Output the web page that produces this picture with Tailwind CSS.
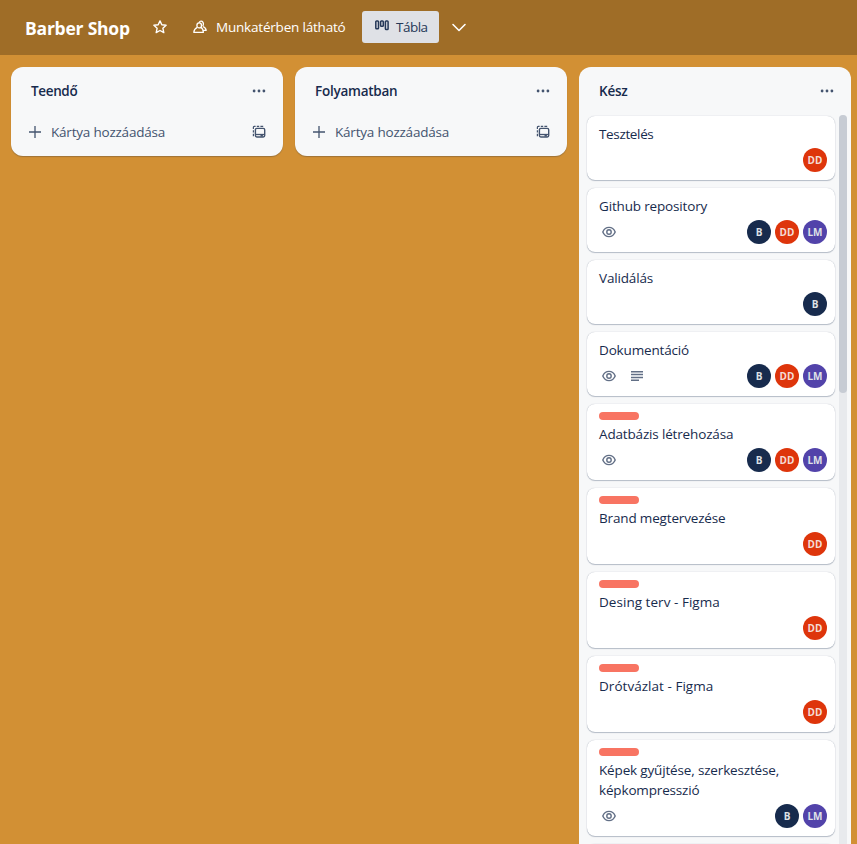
<!DOCTYPE html>
<html lang="hu">
<head>
<meta charset="utf-8">
<title>Barber Shop</title>
<script src="https://cdn.jsdelivr.net/npm/@tailwindcss/browser@4"></script>
</head>
<body class="h-[844px] w-[857px] overflow-hidden bg-[#d29034] font-['Open_Sans','Noto_Sans',sans-serif] text-[13.5px] leading-5 text-[#172b4d]">
<svg class="hidden">
  <symbol id="dots" viewBox="0 0 16 16"><g fill="#44546f"><circle cx="3.1" cy="8" r="1.4"/><circle cx="8" cy="8" r="1.4"/><circle cx="12.9" cy="8" r="1.4"/></g></symbol>
  <symbol id="plus" viewBox="0 0 16 16"><path d="M8 2v12M2 8h12" stroke="#44546f" stroke-width="1.3" fill="none"/></symbol>
  <symbol id="template" viewBox="0 0 16 16"><g fill="none" stroke="#44546f" stroke-width="1.4"><rect x="4.4" y="4.4" width="9.3" height="8.6" rx="1.4"/><path d="M4.6 10.5h9" stroke-width="1.3"/><path d="M9.5 11.8h2.4" stroke-width="1.6"/><path d="M2.4 12.2V9.8M2.4 8.6V6.2M2.4 5V3.2Q2.4 2.3 3.2 2.3H4.6M5.8 2.3h2.4M9.4 2.3h2.8" stroke-width="1.2"/></g></symbol>
  <symbol id="eye" viewBox="0 0 16 16"><g fill="none" stroke="#626f86" stroke-width="1.4"><path d="M1.8 8C3 5.1 5.3 3.4 8 3.4S13 5.1 14.2 8C13 10.9 10.7 12.6 8 12.6S3 10.9 1.8 8Z"/><circle cx="8" cy="8" r="2.2"/></g></symbol>
  <symbol id="lines" viewBox="0 0 16 16"><path d="M2 3.7h12M2 6.5h12M2 9.5h12M2 12.3h8" stroke="#626f86" stroke-width="1.4"/></symbol>
</svg>
<header class="flex h-[55px] items-center bg-black/24 pb-px pl-[25px] text-white">
  <h1 class="w-[128px] pt-px text-[17.5px] font-bold leading-6 tracking-[-0.22px] whitespace-nowrap">Barber Shop</h1>
  <svg class="size-[14px]" viewBox="0 0 14 14" fill="none" stroke="white" stroke-width="1.4" stroke-linejoin="round"><path d="M7 .9 8.8 4.8 13.1 5.3 9.9 8.3 10.8 12.6 7 10.5 3.2 12.6 4.1 8.3.9 5.3 5.2 4.8Z"/></svg>
  <svg class="ml-[26px] size-[14px]" viewBox="0 0 14 14" fill="none" stroke="white" stroke-width="1.3" stroke-linejoin="round"><ellipse cx="6.2" cy="5.4" rx="2.3" ry="2.5"/><path d="M4.3 7.3C2.2 8.2 1 9.6.8 12.3H10.4C10.1 9.7 9.7 8.2 7.9 7.3M6 2.8C6.6 1.1 8 .8 9.1 1.4 10.8 2.4 10.7 4.8 9.7 6.1M9.9 6.5C12 7.4 13 8.4 13.2 10.4H10.4"/></svg>
  <span class="ml-[9px] w-[146px] font-medium tracking-[-0.2px] whitespace-nowrap">Munkatérben látható</span>
  <button class="flex h-8 w-[77px] items-center rounded-[3px] bg-[#dfe1e6] pl-[13px] text-[#253858]">
    <svg class="mb-[3px] h-[11px] w-[15px]" viewBox="0 0 15 11" fill="none" stroke="#253858" stroke-width="1.5"><rect x=".8" y="1" width="2.7" height="7.8" rx=".8"/><rect x="5.6" y="1" width="2.7" height="5.2" rx=".8"/><rect x="10.4" y="1" width="2.7" height="8.6" rx=".8"/></svg>
    <span class="ml-[6px] tracking-[-0.5px]">Tábla</span>
  </button>
  <svg class="ml-3 h-4 w-4" viewBox="0 0 16 16" fill="none" stroke="white" stroke-width="1.6" stroke-linecap="round" stroke-linejoin="round"><path d="M2 5.5l6 6 6-6"/></svg>
</header>
<main class="flex h-[789px] items-start gap-3 overflow-hidden pt-3 pl-[11px]">
  <section class="h-[89px] w-[272px] shrink-0 rounded-xl bg-[#f7f8f9] shadow-[0_1px_1px_#091e4240]">
    <div class="flex h-12 items-center justify-between pr-4 pl-5"><h2 class="font-semibold tracking-[-0.35px]">Teendő</h2><svg class="size-4"><use href="#dots"/></svg></div>
    <div class="flex h-[34px] items-center pr-4 pl-4 text-[#44546f]"><svg class="size-4"><use href="#plus"/></svg><span class="ml-2 flex-1 tracking-[-0.21px]">Kártya hozzáadása</span><svg class="size-4"><use href="#template"/></svg></div>
  </section>
  <section class="h-[89px] w-[272px] shrink-0 rounded-xl bg-[#f7f8f9] shadow-[0_1px_1px_#091e4240]">
    <div class="flex h-12 items-center justify-between pr-4 pl-5"><h2 class="font-semibold tracking-[-0.25px]">Folyamatban</h2><svg class="size-4"><use href="#dots"/></svg></div>
    <div class="flex h-[34px] items-center pr-4 pl-4 text-[#44546f]"><svg class="size-4"><use href="#plus"/></svg><span class="ml-2 flex-1 tracking-[-0.21px]">Kártya hozzáadása</span><svg class="size-4"><use href="#template"/></svg></div>
  </section>
  <section class="h-[800px] w-[272px] shrink-0 rounded-t-xl bg-[#f7f8f9]">
    <div class="flex h-12 items-center justify-between pr-4 pl-5"><h2 class="font-semibold tracking-[-0.2px]">Kész</h2><svg class="size-4"><use href="#dots"/></svg></div>
    <div class="flex h-[752px] justify-between pr-1 pl-2">
      <div id="cards" class="flex w-[248px] flex-col gap-2 pt-px"></div>
      <div class="w-2 rounded-t bg-[#e8eaed]"><div class="h-[278px] rounded bg-[#c7ccd4]"></div></div>
    </div>
  </section>
</main>
<script>
const eye = '<svg class="size-4"><use href="#eye"/></svg>', lines = '<svg class="size-4"><use href="#lines"/></svg>';
const people = {
  B: '<span class="flex size-6 items-center justify-center rounded-full bg-[#172b4d] text-[10px] font-bold text-[#dfe1e6]">B</span>',
  D: '<span class="flex size-6 items-center justify-center rounded-full bg-[#de350b] text-[10px] font-bold tracking-[0.2px] text-[#f4dcd6]">DD</span>',
  L: '<span class="flex size-6 items-center justify-center rounded-full bg-[#5243aa] text-[10px] font-bold text-[#dfe1e6]">LM</span>'
};
const tight = 'tracking-[-0.35px]', normal = 'tracking-[-0.16px]', loose = 'tracking-[0.04px]';
const cards = [
  ['Tesztelés', 0, '', 'D', tight],
  ['Github repository', 0, eye, 'BDL', normal],
  ['Validálás', 0, '', 'B', normal],
  ['Dokumentáció', 0, eye + lines, 'BDL', normal],
  ['Adatbázis létrehozása', 1, eye, 'BDL', normal],
  ['Brand megtervezése', 1, '', 'D', normal],
  ['Desing terv - Figma', 1, '', 'D', loose],
  ['Drótvázlat - Figma', 1, '', 'D', loose],
  ['Képek gyűjtése, szerkesztése,<br>képkompresszió', 1, eye, 'BL', normal],
  ['', 0, '', '', normal]
];
document.getElementById('cards').innerHTML = cards.map(([title, label, badges, who, tracking]) =>
  '<article class="shrink-0 rounded-lg bg-white px-3 py-2 pr-2 shadow-[0_1px_1px_#091e4240,0_0_1px_#091e424f]">' +
  (label ? '<div class="mb-1 h-2 w-10 rounded bg-[#f87462]"></div>' : '') +
  '<h3 class="mb-1 min-h-5 whitespace-nowrap ' + tracking + '">' + title + '</h3>' +
  '<div class="flex h-6 items-center justify-between"><div class="flex gap-3 pl-[2px]">' + badges + '</div><div class="flex gap-1">' + [...who].map(w => people[w]).join('') + '</div></div></article>').join('');
</script>
</body>
</html>
